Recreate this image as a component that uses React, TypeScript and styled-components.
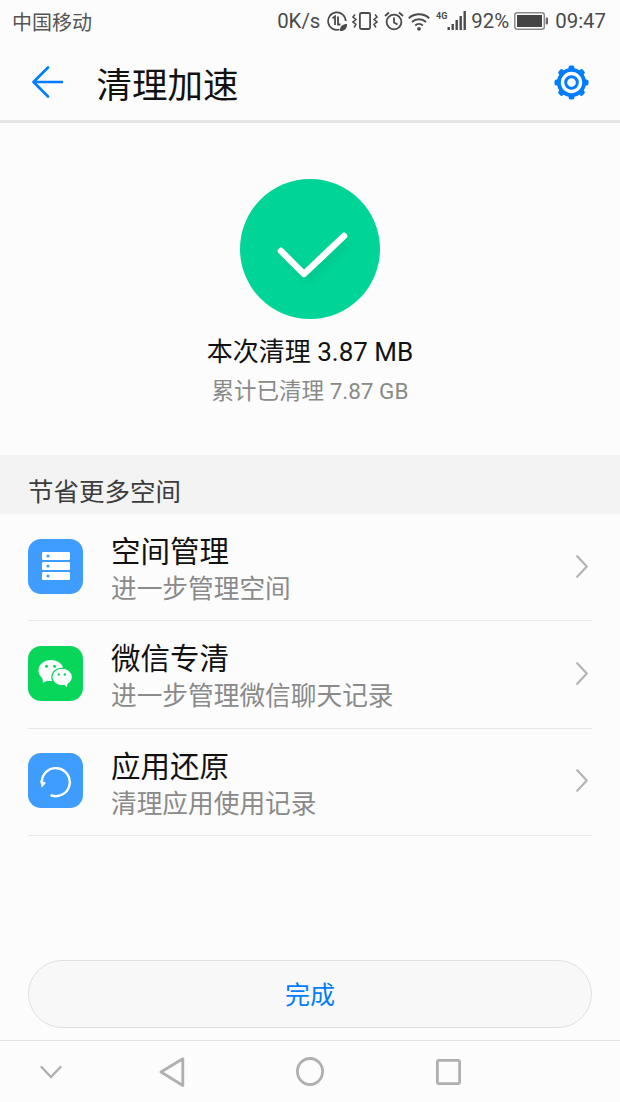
import styled, { createGlobalStyle } from "styled-components";
import type { ReactNode } from "react";

const GlobalStyle = createGlobalStyle`
    html, body {
        margin: 0;
        padding: 0;
        background: #fcfcfc;
    }
    * {
        box-sizing: border-box;
    }
`;

const FONT = `Roboto, "Noto Sans CJK SC", sans-serif`;
const BLUE = "#007dff";
const STATUS_INK = "#4a4a4a";
const NAV_INK = "#b0b0b0";

const Screen = styled.div`
    width: 620px;
    height: 1102px;
    display: flex;
    flex-direction: column;
    background: #fcfcfc;
    font-family: ${FONT};
    overflow: hidden;
`;

const StatusBar = styled.div`
    height: 44px;
    padding: 0 14px 2px 12px;
    display: flex;
    align-items: center;
    justify-content: space-between;
    color: ${STATUS_INK};
`;

const Carrier = styled.span`
    font-size: 20px;
    color: #555;
`;

const StatusRight = styled.div`
    display: flex;
    align-items: center;
`;

const StatusText = styled.span<{ $left?: number }>`
    font-size: 20.4px;
    line-height: 24px;
    margin-left: ${(p) => p.$left ?? 0}px;
`;

const StatusGlyph = styled.svg<{ $left: number }>`
    display: block;
    flex-shrink: 0;
    margin-left: ${(p) => p.$left}px;
`;

const Toolbar = styled.div`
    height: 79px;
    padding: 0 31px 0 32px;
    display: flex;
    align-items: center;
    border-bottom: 3px solid #e4e4e4;
`;

const Title = styled.h1`
    flex: 1;
    margin: 8px 0 0 33.5px;
    font-size: 35.5px;
    font-weight: 400;
    color: #111;
    line-height: 44px;
`;

const Hero = styled.section`
    height: 332px;
    padding-top: 56px;
    display: flex;
    flex-direction: column;
    align-items: center;
`;

const CheckCircle = styled.div`
    width: 140px;
    height: 140px;
    border-radius: 50%;
    background: #00d597;
    display: flex;
    align-items: center;
    justify-content: center;
`;

const CleanedNow = styled.div`
    margin-top: 16px;
    font-size: 26px;
    line-height: 34px;
    color: #111;
`;

const CleanedTotal = styled.div`
    margin-top: 7px;
    font-size: 22.5px;
    line-height: 30px;
    color: #8a8a8a;
`;

const SectionHeader = styled.div`
    height: 59px;
    padding: 10px 28px 0;
    display: flex;
    align-items: center;
    background: #f3f3f3;
    font-size: 25.5px;
    color: #3c3c3c;
`;

const List = styled.div`
    display: flex;
    flex-direction: column;
`;

const Row = styled.div`
    height: 107.3px;
    margin: 0 28px;
    padding: 0 4px 2px 0;
    display: flex;
    align-items: center;
    border-bottom: 1.5px solid #e6e6e6;
`;

const IconTile = styled.div<{ $bg: string }>`
    width: 55px;
    height: 55px;
    flex-shrink: 0;
    border-radius: 13px;
    background: ${(p) => p.$bg};
    display: flex;
    align-items: center;
    justify-content: center;
`;

const RowText = styled.div`
    flex: 1;
    margin: 7px 0 0 28px;
    display: flex;
    flex-direction: column;
    gap: 2px;
`;

const RowTitle = styled.div`
    font-size: 29.5px;
    line-height: 38px;
    color: #111;
`;

const RowSub = styled.div`
    font-size: 25.7px;
    line-height: 33px;
    color: #8a8a8a;
`;

const Spacer = styled.div`
    flex: 1;
`;

const DoneButton = styled.button`
    width: 564px;
    height: 68px;
    margin: 0 28px 12px;
    padding: 0 0 2px;
    border: 1.5px solid #e0e0e0;
    border-radius: 34px;
    background: #f8f8f8;
    color: ${BLUE};
    font-family: ${FONT};
    font-size: 25px;
`;

const NavBar = styled.nav`
    height: 62px;
    border-top: 1.5px solid #e4e4e4;
    display: grid;
    grid-template-columns: 102px 140px 136px 140px;
    align-items: center;
    justify-items: center;
`;

function BackArrow() {
    return (
        <svg width="31" height="32" viewBox="0 0 31 32" fill="none">
            <path
                d="M30 16H2M16 1.500 1.500 16 16 30.500"
                stroke={BLUE}
                strokeWidth="2.600"
                strokeLinecap="round"
                strokeLinejoin="round"
            />
        </svg>
    );
}

function Gear() {
    const teeth = [0, 45, 90, 135, 180, 225, 270, 315];
    return (
        <svg width="35" height="35" viewBox="0 0 36 36" fill="none">
            {teeth.map((deg) => (
                <rect
                    key={deg}
                    x="15"
                    y="0.500"
                    width="6"
                    height="7"
                    rx="2"
                    fill={BLUE}
                    transform={`rotate(${deg} 18 18)`}
                />
            ))}
            <circle cx="18" cy="18" r="13" stroke={BLUE} strokeWidth="4" fill="#fcfcfc" />
            <circle cx="18" cy="18" r="6" stroke={BLUE} strokeWidth="3" />
        </svg>
    );
}

function Check() {
    return (
        <svg width="140" height="140" viewBox="0 0 140 140" fill="none">
            <defs>
                <filter id="checkShade" x="-30%" y="-30%" width="160%" height="160%">
                    <feGaussianBlur stdDeviation="5" />
                </filter>
            </defs>
            <path
                d="M45 77 68 99 108 62"
                stroke="#00a878"
                strokeOpacity="0.4"
                strokeWidth="7"
                filter="url(#checkShade)"
            />
            <path
                d="M41 72 64 95 104 57"
                stroke="#fff"
                strokeWidth="6.500"
                strokeLinecap="round"
                strokeLinejoin="round"
            />
        </svg>
    );
}

function StorageIcon() {
    const slots = [0, 10, 20];
    return (
        <svg width="28" height="28" viewBox="0 0 28 28">
            {slots.map((y) => (
                <g key={y}>
                    <rect x="0" y={y} width="28" height="8" rx="1.200" fill="#fff" />
                    <circle cx="6" cy={y + 4} r="1.600" fill="#3f9dff" />
                </g>
            ))}
        </svg>
    );
}

function WeChatIcon() {
    return (
        <svg width="35" height="28" viewBox="0 0 35 28">
            <ellipse cx="13" cy="11.500" rx="12.500" ry="10.500" fill="#fff" />
            <path d="M4 17 5 24 12 20z" fill="#fff" />
            <ellipse cx="24.200" cy="18" rx="10.300" ry="8.800" fill="#fff" stroke="#07d65a" strokeWidth="1.200" />
            <path d="M26 25.500 29 28 29.500 24z" fill="#fff" />
            <circle cx="8.500" cy="7.200" r="1.500" fill="#07d65a" />
            <circle cx="16.500" cy="7.200" r="1.500" fill="#07d65a" />
            <circle cx="20.800" cy="15.500" r="1.200" fill="#07d65a" />
            <circle cx="26.800" cy="15.500" r="1.200" fill="#07d65a" />
        </svg>
    );
}

function RestoreIcon() {
    return (
        <svg width="34" height="34" viewBox="0 0 34 34" fill="none">
            <path
                d="M2.800 18.500A14 14 0 1 1 12.500 31.500"
                stroke="#fff"
                strokeWidth="2.400"
                strokeLinecap="round"
            />
            <path d="M1.300 16.500 7 18.800 2.700 23.800z" fill="#fff" />
        </svg>
    );
}

function Chevron() {
    return (
        <svg width="12" height="23" viewBox="0 0 12 23" fill="none">
            <path
                d="M1.200 1.200 10.800 11.500 1.200 21.800"
                stroke="#b4b4b4"
                strokeWidth="2.200"
                strokeLinecap="round"
                strokeLinejoin="round"
            />
        </svg>
    );
}

function StatusIcons() {
    const c = STATUS_INK;
    return (
        <>
            <StatusGlyph $left={7} width="20" height="20" viewBox="0 0 20 20" fill="none">
                <path d="M12.500 18.500A8.800 8.800 0 1 1 18.700 10" stroke={c} strokeWidth="1.700" />
                <path d="M5.500 7.200 8 5.500V14" stroke={c} strokeWidth="1.800" />
                <path d="M11 5.500V13.500H13.500" stroke={c} strokeWidth="1.800" />
                <path d="M13 20c-.5-4.500 2.500-7 7-7 .2 4.500-2.500 7-7 7z" fill={c} />
            </StatusGlyph>
            <StatusGlyph $left={5} width="26" height="20" viewBox="0 0 26 20" fill="none">
                <rect x="7.900" y="2" width="10.200" height="16" rx="1.500" stroke={c} strokeWidth="1.800" />
                <path
                    d="M3 3.500 1 6l3 2.500L1 11l3 2.500L2 16.500M23 3.500 25 6l-3 2.500L25 11l-3 2.500 2 3"
                    stroke={c}
                    strokeWidth="1.500"
                />
            </StatusGlyph>
            <StatusGlyph $left={6} width="20" height="20" viewBox="0 0 20 20" fill="none">
                <circle cx="10" cy="11" r="7.400" stroke={c} strokeWidth="1.800" />
                <path d="M10 6.500V11.500L13.500 13.500M1 5 5 1.500M19 5 15 1.500" stroke={c} strokeWidth="1.800" />
            </StatusGlyph>
            <StatusGlyph $left={4} width="22" height="19" viewBox="0 0 22 19" fill="none">
                <path
                    d="M.8 6.200C6.500 1 15.500 1 21.200 6.200M4 10c4-3.600 10-3.600 14 0M7.200 13.400c2.200-1.900 5.400-1.900 7.600 0"
                    stroke={c}
                    strokeWidth="2"
                />
                <circle cx="11" cy="16.800" r="1.900" fill={c} />
            </StatusGlyph>
            <StatusGlyph $left={6} width="31" height="20" viewBox="0 0 31 20">
                <text x="0" y="8" fontSize="9" fontWeight="700" fill={c} fontFamily="Roboto, sans-serif">
                    4G
                </text>
                <rect x="11.500" y="16" width="2.400" height="3" fill={c} />
                <rect x="15.500" y="13" width="2.400" height="6" fill={c} />
                <rect x="19.500" y="9" width="2.400" height="10" fill={c} />
                <rect x="23.500" y="5" width="2.400" height="14" fill={c} />
                <rect x="27.500" y="0" width="2.400" height="19" fill={c} />
            </StatusGlyph>
        </>
    );
}

function Battery() {
    return (
        <StatusGlyph $left={5} width="34" height="18" viewBox="0 0 34 18" fill="none">
            <rect x="0.800" y="0.800" width="29.500" height="16.400" rx="2.500" stroke="#8a8a8a" strokeWidth="1.500" />
            <rect x="3" y="3" width="25" height="12" fill="#444" />
            <rect x="31.700" y="5.500" width="2.300" height="7" rx="1" fill="#666" />
        </StatusGlyph>
    );
}

function NavIcons() {
    return (
        <>
            <svg width="22" height="14" viewBox="0 0 22 14" fill="none">
                <path d="M1.500 2 11 12 20.500 2" stroke={NAV_INK} strokeWidth="2.400" strokeLinecap="round" />
            </svg>
            <svg width="26" height="30" viewBox="0 0 26 30" fill="none">
                <path d="M23.800 1.800 2 15 23.800 28.500z" stroke={NAV_INK} strokeWidth="2.800" strokeLinejoin="round" />
            </svg>
            <svg width="28" height="29" viewBox="0 0 28 29" fill="none">
                <ellipse cx="14" cy="14.500" rx="12.600" ry="13" stroke={NAV_INK} strokeWidth="2.800" />
            </svg>
            <svg width="25" height="26" viewBox="0 0 25 26" fill="none">
                <rect x="1.400" y="1.400" width="22.200" height="23.200" rx="1.500" stroke={NAV_INK} strokeWidth="2.800" />
            </svg>
        </>
    );
}

const rows: { title: string; sub: string; bg: string; icon: ReactNode }[] = [
    { title: "空间管理", sub: "进一步管理空间", bg: "#3f9dff", icon: <StorageIcon /> },
    { title: "微信专清", sub: "进一步管理微信聊天记录", bg: "#07d65a", icon: <WeChatIcon /> },
    { title: "应用还原", sub: "清理应用使用记录", bg: "#3f9dff", icon: <RestoreIcon /> },
];

export default function App() {
    return (
        <Screen>
            <GlobalStyle />
            <StatusBar>
                <Carrier>中国移动</Carrier>
                <StatusRight>
                    <StatusText>0K/s</StatusText>
                    <StatusIcons />
                    <StatusText $left={4}>92%</StatusText>
                    <Battery />
                    <StatusText $left={7}>09:47</StatusText>
                </StatusRight>
            </StatusBar>

            <Toolbar>
                <BackArrow />
                <Title>清理加速</Title>
                <Gear />
            </Toolbar>

            <Hero>
                <CheckCircle>
                    <Check />
                </CheckCircle>
                <CleanedNow>本次清理 3.87 MB</CleanedNow>
                <CleanedTotal>累计已清理 7.87 GB</CleanedTotal>
            </Hero>

            <SectionHeader>节省更多空间</SectionHeader>

            <List>
                {rows.map((row) => (
                    <Row key={row.title}>
                        <IconTile $bg={row.bg}>{row.icon}</IconTile>
                        <RowText>
                            <RowTitle>{row.title}</RowTitle>
                            <RowSub>{row.sub}</RowSub>
                        </RowText>
                        <Chevron />
                    </Row>
                ))}
            </List>

            <Spacer />
            <DoneButton>完成</DoneButton>
            <NavBar>
                <NavIcons />
            </NavBar>
        </Screen>
    );
}
